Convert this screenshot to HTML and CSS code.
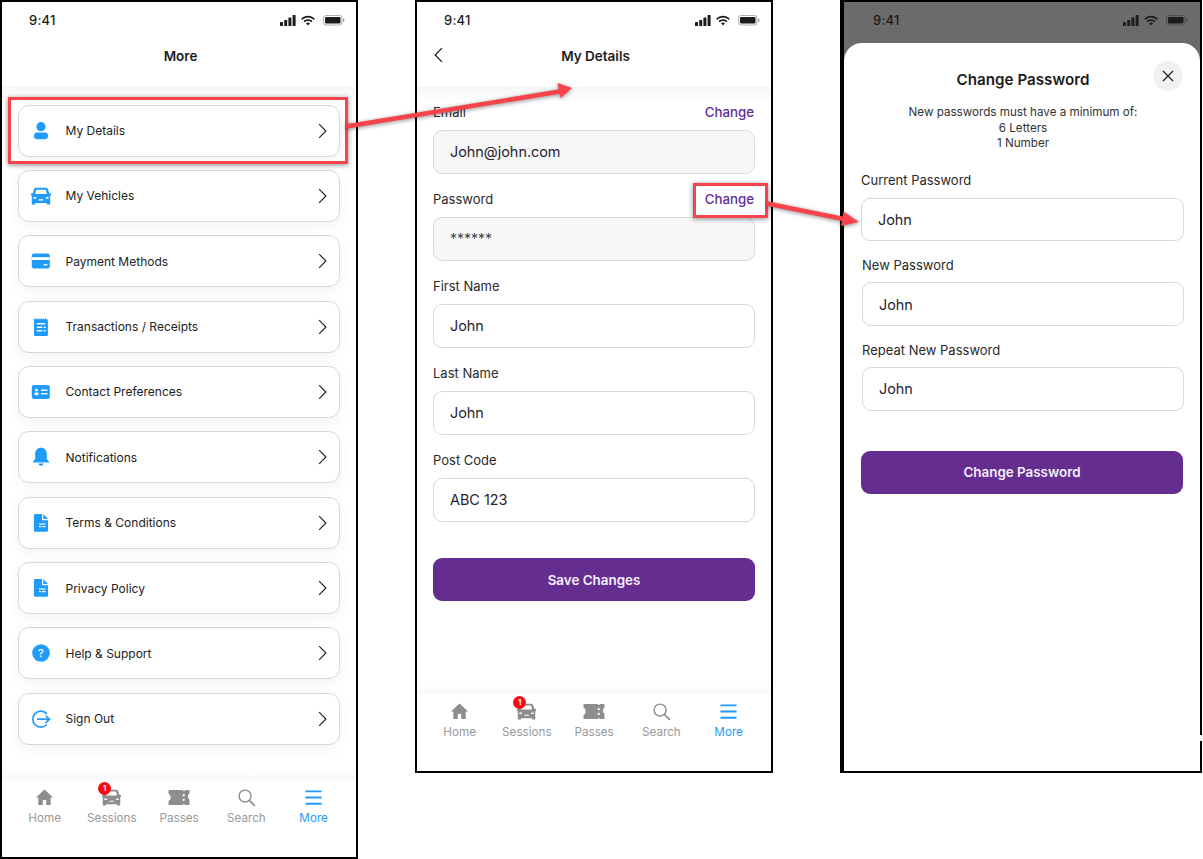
FILE: index.html
```html
<!DOCTYPE html>
<html lang="en">
  <head>
    <meta charset="UTF-8" />
    <title>Account screens</title>
    <link rel="stylesheet" href="styles.css">
  </head>

  <body>
    <svg class="sprite" width="0" height="0">
      <symbol id="i-status" viewBox="0 0 65 12">
        <rect x="0" y="8" width="3" height="4" rx=".6" />
        <rect x="4.2" y="6" width="3" height="6" rx=".6" />
        <rect x="8.4" y="3.4" width="3" height="8.6" rx=".6" />
        <rect x="12.6" y="1" width="3" height="11" rx=".6" />
        <path d="M28 3.6c2.2 0 4.2.9 5.6 2.3l1.2-1.3C33 2.800 30.600 1.700 28 1.700s-5 1.100-6.800 2.900l1.200 1.300C23.800 4.500 25.800 3.600 28 3.600z" />
        <path d="M28 7c1.300 0 2.400.5 3.300 1.300l1.200-1.300C31.300 5.900 29.700 5.200 28 5.200s-3.300.7-4.500 1.800l1.200 1.300C25.600 7.500 26.700 7 28 7z" />
        <path d="M28 8.500c-.8 0-1.500.3-2 .8l2 2.200 2-2.200c-.5-.5-1.200-.8-2-.8z" />
        <rect x="43.500" y="1.500" width="18.500" height="9.500" rx="2.500" fill="none" stroke="currentColor" stroke-opacity=".35" />
        <rect x="45" y="3" width="15.500" height="6.500" rx="1.300" />
        <rect x="63" y="4.500" width="1.300" height="3.500" rx=".6" opacity=".4" />
      </symbol>
      <symbol id="i-person" viewBox="0 0 20 20">
        <circle cx="10" cy="5.700" r="4.600" />
        <rect x="3" y="11.500" width="14" height="6.800" rx="3.300" />
      </symbol>
      <symbol id="i-car" viewBox="0 0 20 20">
        <path d="M5 1.800h10c1 0 1.700.6 2 1.500l1.200 3.900H19a1 1 0 0 1 1 1v1l-.8.6v8.700h-3.400v-1.500H4.200v1.500H.8V9.800L0 9.200v-1a1 1 0 0 1 1-1h.8L3 3.300c.3-.9 1-1.500 2-1.500z" />
        <path d="M5.200 3.800h9.600l1 4.200H4.200z" fill="#fff" />
        <rect x="2.300" y="11" width="3" height="1.700" rx=".8" fill="#fff" />
        <rect x="14.700" y="11" width="3" height="1.700" rx=".8" fill="#fff" />
        <rect x="7.500" y="13.300" width="5" height="1.200" rx=".6" fill="#fff" />
      </symbol>
      <symbol id="i-card" viewBox="0 0 20 20">
        <rect x=".8" y="2.500" width="18" height="15" rx="2.300" />
        <rect x=".8" y="6.200" width="18" height="2.800" fill="#fff" />
        <rect x="12.500" y="13.200" width="4" height="1.300" fill="#fff" />
      </symbol>
      <symbol id="i-receipt" viewBox="0 0 20 20">
        <path d="M3 1.500h1.200v.8h1.100v-.8h1.100v.8h1.100v-.8h1.100v.8h1.100v-.8h1.100v.8h1.100v-.8h1.100v.8h1.100v-.8h1.100v.8h.4c.7 0 1.300.5 1.300 1.200v14.400c0 .7-.6 1.200-1.300 1.200H4.300c-.7 0-1.300-.5-1.300-1.200z" />
        <rect x="5.800" y="6" width="8.400" height="1.400" fill="#fff" />
        <rect x="5.800" y="9.600" width="5.400" height="1.400" fill="#fff" />
        <rect x="12.600" y="9.600" width="2" height="1.400" fill="#fff" />
        <rect x="5.800" y="13" width="5.400" height="1.400" fill="#fff" />
        <rect x="12.600" y="13" width="2" height="1.400" fill="#fff" />
      </symbol>
      <symbol id="i-contact" viewBox="0 0 20 20">
        <rect x=".8" y="3" width="18" height="14" rx="2" />
        <circle cx="5.500" cy="8" r="1.500" fill="#fff" />
        <rect x="3.400" y="10.500" width="4.200" height="2.800" rx="1.200" fill="#fff" />
        <rect x="10" y="7.500" width="6.500" height="1.400" fill="#fff" />
        <rect x="10" y="11" width="6.500" height="1.400" fill="#fff" />
      </symbol>
      <symbol id="i-bell" viewBox="0 0 20 20">
        <path d="M10 .8c3.600 0 5.800 2.700 5.800 6.200v5l2.100 2.400c.4.500.1 1.100-.5 1.100H2.600c-.6 0-.9-.6-.5-1.100L4.200 12V7c0-3.500 2.200-6.200 5.800-6.200z" />
        <path d="M7.500 16.500h5a2.500 2.200 0 0 1-5 0z" />
      </symbol>
      <symbol id="i-doc" viewBox="0 0 20 20">
        <path d="M4.500 1h6.500v5.200c0 .6.400 1 1 1h5v10c0 .9-.7 1.600-1.600 1.600H4.500c-.9 0-1.600-.7-1.600-1.600V2.600C2.900 1.700 3.600 1 4.500 1z" />
        <path d="M12.300 1l4.700 4.900h-4.700z" />
        <rect x="8" y="10.500" width="6.500" height="1.200" fill="#fff" />
        <rect x="8" y="13" width="2" height="1.200" fill="#fff" />
        <rect x="11" y="13" width="3.500" height="1.200" fill="#fff" />
      </symbol>
      <symbol id="i-signout" viewBox="0 0 20 20">
        <path d="M15.300 4.300A8 8 0 1 0 15.300 16" fill="none" stroke="currentColor" stroke-width="1.700" stroke-linecap="round" />
        <path d="M6 10.200h12.500M14.500 6.500l4 3.700-4 3.700" fill="none" stroke="currentColor" stroke-width="1.700" />
      </symbol>
      <symbol id="i-chev" viewBox="0 0 10 18">
        <path d="M1.200 1.200L8.800 9l-7.600 7.800" fill="none" stroke="currentColor" stroke-width="1.300" />
      </symbol>
      <symbol id="i-home" viewBox="0 0 20 20">
        <path d="M10 1.500L19 10h-2.500v8h-4.700v-5.500H8.200V18H3.500v-8H1z" />
      </symbol>
      <symbol id="i-ticket" viewBox="0 0 24 20">
        <path d="M1 2h14.500a1.800 1.800 0 0 0 3.200 0H23v4a2.500 2.500 0 0 0-1.500 2.300v1.400c0 1 .6 1.900 1.500 2.300v6h-4.300a1.800 1.800 0 0 0-3.200 0H1v-4.500c1.200-.4 2-1.300 2-2.500v-2C3 7.300 2.200 6.400 1 6z" />
        <circle cx="17" cy="7.500" r="1.200" fill="#fff" />
        <circle cx="17" cy="12.500" r="1.200" fill="#fff" />
      </symbol>
      <symbol id="i-search" viewBox="0 0 20 20">
        <circle cx="8.500" cy="8.500" r="6.300" fill="none" stroke="currentColor" stroke-width="1.500" />
        <path d="M13 13l5.800 5.800" fill="none" stroke="currentColor" stroke-width="1.700" />
      </symbol>
      <symbol id="i-menu" viewBox="0 0 20 20">
        <path d="M1.500 3.500h17M1.500 10h17M1.500 16.500h17" fill="none" stroke="currentColor" stroke-width="2" />
      </symbol>
    </svg>

    <div class="phone phone-more">
      <div class="status">
        <span class="time">9:41</span>
        <svg class="status-icons"><use href="#i-status" /></svg>
      </div>
      <div class="header"><h1>More</h1></div>

      <div class="content menu">
        <a class="menu-item"><svg class="menu-icon"><use href="#i-person" /></svg><span>My Details</span><svg class="chev"><use href="#i-chev" /></svg></a>
        <a class="menu-item"><svg class="menu-icon"><use href="#i-car" /></svg><span>My Vehicles</span><svg class="chev"><use href="#i-chev" /></svg></a>
        <a class="menu-item"><svg class="menu-icon"><use href="#i-card" /></svg><span>Payment Methods</span><svg class="chev"><use href="#i-chev" /></svg></a>
        <a class="menu-item"><svg class="menu-icon"><use href="#i-receipt" /></svg><span>Transactions / Receipts</span><svg class="chev"><use href="#i-chev" /></svg></a>
        <a class="menu-item"><svg class="menu-icon"><use href="#i-contact" /></svg><span>Contact Preferences</span><svg class="chev"><use href="#i-chev" /></svg></a>
        <a class="menu-item"><svg class="menu-icon"><use href="#i-bell" /></svg><span>Notifications</span><svg class="chev"><use href="#i-chev" /></svg></a>
        <a class="menu-item"><svg class="menu-icon"><use href="#i-doc" /></svg><span>Terms &amp; Conditions</span><svg class="chev"><use href="#i-chev" /></svg></a>
        <a class="menu-item"><svg class="menu-icon"><use href="#i-doc" /></svg><span>Privacy Policy</span><svg class="chev"><use href="#i-chev" /></svg></a>
        <a class="menu-item">
          <svg class="menu-icon" viewBox="0 0 20 20">
            <circle cx="10" cy="10" r="8.800" />
            <text class="help-mark" x="10" y="14">?</text>
          </svg>
          <span>Help &amp; Support</span><svg class="chev"><use href="#i-chev" /></svg>
        </a>
        <a class="menu-item"><svg class="menu-icon"><use href="#i-signout" /></svg><span>Sign Out</span><svg class="chev"><use href="#i-chev" /></svg></a>
      </div>

      <div class="tabs">
        <a class="tab"><svg><use href="#i-home" /></svg>Home</a>
        <a class="tab"><span class="badge">1</span><svg><use href="#i-car" /></svg>Sessions</a>
        <a class="tab"><svg class="wide"><use href="#i-ticket" /></svg>Passes</a>
        <a class="tab"><svg><use href="#i-search" /></svg>Search</a>
        <a class="tab active"><svg><use href="#i-menu" /></svg>More</a>
      </div>
    </div>

    <div class="phone phone-details">
      <div class="status">
        <span class="time">9:41</span>
        <svg class="status-icons"><use href="#i-status" /></svg>
      </div>
      <div class="header">
        <svg class="back"><use href="#i-chev" /></svg>
        <h1>My Details</h1>
      </div>

      <div class="content form">
        <div class="field">
          <div class="field-head"><label>Email</label><a class="change">Change</a></div>
          <div class="input locked">John@john.com</div>
        </div>
        <div class="field">
          <div class="field-head"><label>Password</label><a class="change">Change</a></div>
          <div class="input locked masked">******</div>
        </div>
        <div class="field">
          <div class="field-head"><label>First Name</label></div>
          <div class="input">John</div>
        </div>
        <div class="field">
          <div class="field-head"><label>Last Name</label></div>
          <div class="input">John</div>
        </div>
        <div class="field">
          <div class="field-head"><label>Post Code</label></div>
          <div class="input">ABC 123</div>
        </div>
        <button class="primary">Save Changes</button>
      </div>

      <div class="tabs">
        <a class="tab"><svg><use href="#i-home" /></svg>Home</a>
        <a class="tab"><span class="badge">1</span><svg><use href="#i-car" /></svg>Sessions</a>
        <a class="tab"><svg class="wide"><use href="#i-ticket" /></svg>Passes</a>
        <a class="tab"><svg><use href="#i-search" /></svg>Search</a>
        <a class="tab active"><svg><use href="#i-menu" /></svg>More</a>
      </div>
    </div>

    <div class="phone phone-password">
      <div class="status">
        <span class="time">9:41</span>
        <svg class="status-icons"><use href="#i-status" /></svg>
      </div>
      <div class="modal">
        <button class="close" aria-label="Close">
          <svg viewBox="0 0 12 12"><path d="M1 1l10 10M11 1L1 11" /></svg>
        </button>
        <h2>Change Password</h2>
        <p class="rules">New passwords must have a minimum of:<br />6 Letters<br />1 Number</p>
        <div class="fields">
          <div class="field nudge">
            <div class="field-head"><label>Current Password</label></div>
            <div class="input">John</div>
          </div>
          <div class="field">
            <div class="field-head"><label>New Password</label></div>
            <div class="input">John</div>
          </div>
          <div class="field">
            <div class="field-head"><label>Repeat New Password</label></div>
            <div class="input">John</div>
          </div>
          <button class="primary nudge">Change Password</button>
        </div>
      </div>
      <i class="border-gap"></i>
    </div>

    <!-- review markup on top of the screens -->
    <div class="callout callout-row"></div>
    <div class="callout callout-change"></div>
    <svg class="arrows" width="1203" height="859">
      <path d="M346 126.500L560 91.500" />
      <path class="head" d="M572 88L557.500 83L560.500 98z" />
      <path d="M767 203.500L846 219.500" />
      <path class="head" d="M859 222L843.500 211.500L841 226z" />
    </svg>
  </body>
</html>
```

FILE: styles.css
```css
* {
  box-sizing: border-box;
}

html,
body {
  margin: 0;
  height: 100%;
}

body {
  position: relative;
  overflow: hidden;
  background: #fff;
  color: #1c1c1e;
  font-family: Inter, "Liberation Sans", sans-serif;
}

.sprite {
  position: absolute;
}

/* the three screens sit on a free canvas */
.phone {
  position: absolute;
  top: 0;
  display: flex;
  flex-direction: column;
  border: 2px solid #000;
  background: #fff;
}

.phone-more {
  left: 0;
  width: 358px;
  height: 859px;
}

.phone-details {
  left: 415px;
  width: 358px;
  height: 773px;
}

.phone-password {
  left: 840px;
  width: 362px;
  height: 773px;
  border-left-width: 4px;
  background: #6b6b6b;
}

.status {
  display: flex;
  justify-content: space-between;
  align-items: center;
  flex: none;
  height: 36px;
  padding: 0 11px 0 27px;
}

.phone-password .status {
  height: 41px;
  padding: 0 12px 5px 29px;
}

.time {
  font-size: 13px;
  font-weight: 500;
  letter-spacing: 0.2px;
}

.status-icons {
  width: 65px;
  height: 12px;
  fill: currentColor;
}

.header {
  position: relative;
  flex: none;
  display: flex;
  justify-content: center;
  align-items: center;
  height: 49px;
  padding: 0 0 13px 3px;
}

.header h1 {
  margin: 0;
  font-size: 13.500px;
  font-weight: 600;
}

.back {
  position: absolute;
  top: 9px;
  left: 17px;
  width: 9px;
  height: 16px;
  transform: scaleX(-1);
  color: #111;
}

.content {
  flex: 1;
  background: linear-gradient(#f6f6f6, #fff 14px, #fff calc(100% - 14px), #f9f9f9);
}

/* menu list */
.menu {
  display: flex;
  flex-direction: column;
  gap: 13.350px;
  padding: 17.600px 16px 0 16px;
}

.menu-item {
  display: flex;
  align-items: center;
  flex: none;
  height: 52px;
  padding: 0 12px;
  border: 1px solid #d8d8d8;
  border-radius: 11px;
  background: #fff;
  box-shadow: 0 4px 14px rgba(0, 0, 0, 0.05);
  font-size: 12px;
  color: #222;
}

.menu-icon {
  flex: none;
  width: 20px;
  height: 20px;
  margin-right: 14.500px;
  fill: #1e9bfb;
  color: #1e9bfb;
}

.help-mark {
  fill: #fff;
  font-size: 11px;
  font-weight: 500;
  text-anchor: middle;
}

.menu-item span {
  flex: 1;
}

.chev {
  flex: none;
  width: 9px;
  height: 16px;
  color: #222;
}

/* bottom tabs */
.tabs {
  flex: none;
  display: flex;
  height: 77px;
  padding: 8px 0 0 9px;
  background: #fff;
}

.tab {
  position: relative;
  flex: 0 0 67.250px;
  display: flex;
  flex-direction: column;
  align-items: center;
  gap: 4px;
  color: #999;
  font-size: 11.700px;
}

.tab svg {
  width: 19px;
  height: 19px;
  fill: #8e8e8e;
  color: #8e8e8e;
}

.tab svg.wide {
  width: 24px;
}

.tab.active {
  color: #1e9bfb;
}

.tab.active svg {
  color: #1e9bfb;
}

.badge {
  position: absolute;
  top: -6px;
  left: 20px;
  width: 13px;
  height: 13px;
  border-radius: 50%;
  background: #f60c12;
  color: #fff;
  font-size: 8px;
  font-weight: 600;
  line-height: 13px;
  text-align: center;
}

/* forms */
.form {
  display: flex;
  flex-direction: column;
  gap: 16.500px;
  padding: 16px 16px 0;
}

.field-head {
  display: flex;
  justify-content: space-between;
  align-items: center;
  height: 19px;
  margin-bottom: 8px;
  font-size: 13px;
  color: #2a2a2a;
}

.form .field-head {
  padding-bottom: 2px;
}

.change {
  margin-right: 1px;
  color: #5f2b98;
  font-size: 13.300px;
  font-weight: 500;
}

.input {
  display: flex;
  align-items: center;
  height: 43.500px;
  padding: 0 16px;
  border: 1px solid #d9d9d9;
  border-radius: 9px;
  background: #fff;
  font-size: 14.400px;
  color: #1f2230;
}

.input.locked {
  background: #f7f7f7;
}

.input.masked {
  font-size: 14px;
  color: #444;
}

.primary {
  display: block;
  width: 322px;
  height: 43px;
  margin-top: 20px;
  border: 0;
  border-radius: 9px;
  background: #662d91;
  color: #f4eef9;
  font-family: inherit;
  font-size: 13.400px;
  font-weight: 600;
}

/* change password sheet */
.modal {
  position: relative;
  flex: 1;
  padding: 26px 0 0 18px;
  border-radius: 18px 18px 0 0;
  background: #fff;
}

.modal h2 {
  margin: 0;
  width: 322px;
  font-size: 15.200px;
  font-weight: 600;
  line-height: 22px;
  text-align: center;
}

.rules {
  width: 322px;
  margin: 14px 0 19px;
  font-size: 11.650px;
  line-height: 15.500px;
  text-align: center;
  color: #333;
}

.fields {
  display: flex;
  flex-direction: column;
  gap: 14.300px;
  width: 322px;
}

.fields .primary {
  margin-top: 25.700px;
}

.nudge {
  margin-left: -1px;
}

.close {
  position: absolute;
  top: 18px;
  right: 17px;
  width: 30px;
  height: 30px;
  padding: 9px;
  border: 0;
  border-radius: 50%;
  background: #f1f1f1;
}

.close svg {
  display: block;
  width: 12px;
  height: 12px;
  fill: none;
  stroke: #1c1c1e;
  stroke-width: 1.200;
}

/* small break in the right edge of the third frame */
.border-gap {
  position: absolute;
  top: 733px;
  right: -2px;
  width: 2px;
  height: 6px;
  background: #fff;
}

/* red review boxes and arrows */
.callout {
  position: absolute;
  border: 3px solid #f6434c;
  box-shadow: 0 1px 5px rgba(0, 0, 0, 0.45);
}

.callout-row {
  top: 97px;
  left: 7.500px;
  width: 340.500px;
  height: 67px;
}

.callout-change {
  top: 183px;
  left: 693px;
  width: 75px;
  height: 34.500px;
}

.arrows {
  position: absolute;
  top: 0;
  left: 0;
  fill: none;
  stroke: #f6434c;
  stroke-width: 4.500px;
  filter: drop-shadow(0 1px 2px rgba(0, 0, 0, 0.45));
}

.arrows .head {
  fill: #f6434c;
  stroke: none;
}
```
